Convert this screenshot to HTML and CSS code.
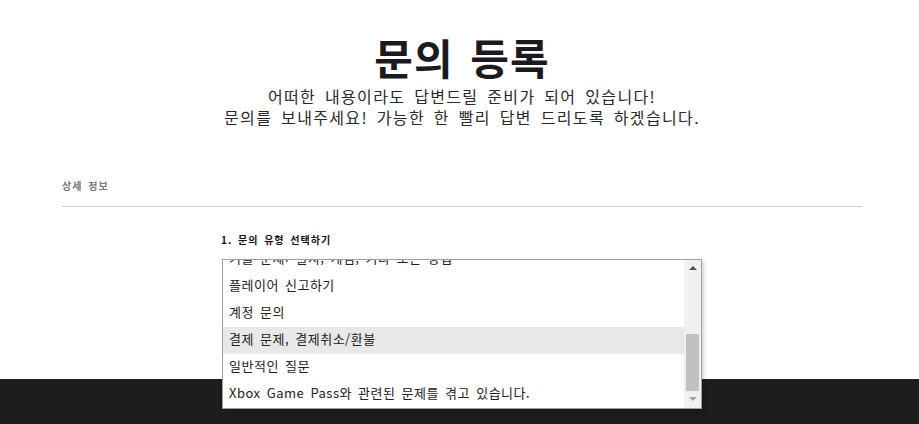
FILE: index.html
```html
<!DOCTYPE html>
<html lang="ko">
<head>
    <meta charset="UTF-8">
    <title>문의 등록</title>
    <link rel="stylesheet" href="styles.css">
</head>
<body>

<div class="page">
    <header class="intro">
        <h1>문의 등록</h1>
        <p>어떠한 내용이라도 답변드릴 준비가 되어 있습니다!<br>문의를 보내주세요! 가능한 한 빨리 답변 드리도록 하겠습니다.</p>
    </header>

    <section class="details">
        <h2 class="section-title">상세 정보</h2>

        <div class="field">
            <label class="field-label">1. 문의 유형 선택하기</label>
            <div class="select-box"></div>

            <div class="select-popup">
                <ul class="options">
                    <li>기술 문제: 설치, 게임, 기타 모든 방법</li>
                    <li>플레이어 신고하기</li>
                    <li>계정 문의</li>
                    <li class="active">결제 문제, 결제취소/환불</li>
                    <li>일반적인 질문</li>
                    <li>Xbox Game Pass와 관련된 문제를 겪고 있습니다.</li>
                </ul>
                <div class="scrollbar">
                    <span class="arrow up"></span>
                    <span class="thumb"></span>
                    <span class="arrow down"></span>
                </div>
            </div>
        </div>
    </section>
</div>

<footer class="site-footer"></footer>

</body>
</html>
```

FILE: styles.css
```css
* {
    box-sizing: border-box;
}

body {
    margin: 0;
    font-family: 'Noto Sans CJK KR', 'Noto Sans', sans-serif;
    background-color: white;
    color: #222;
}

.page {
    padding-left: 5px;
}

.intro {
    padding-top: 32px;
    text-align: center;
}

.intro h1 {
    margin: 0;
    font-size: 42px;
    line-height: 50px;
    font-weight: 700;
    letter-spacing: 1px;
    word-spacing: 4px;
    color: #1b1b1f;
}

.intro p {
    margin: 4px 0 0;
    font-size: 16px;
    line-height: 21px;
    letter-spacing: 1.35px;
    word-spacing: 3px;
    color: #2a2a2a;
}

.details {
    width: 800px;
    margin: 51px auto 0;
}

.section-title {
    margin: 0;
    padding-bottom: 13px;
    border-bottom: 1px solid #d2d2d2;
    font-size: 10px;
    line-height: 14px;
    font-weight: 700;
    letter-spacing: 1px;
    word-spacing: 2px;
    color: #777;
}

.field {
    position: relative;
    width: 482px;
    margin: 26px auto 0;
    height: 146px;
}

.field-label {
    display: block;
    font-size: 10px;
    line-height: 14px;
    font-weight: 700;
    letter-spacing: 1px;
    word-spacing: 2px;
    color: #111;
}

.select-box {
    height: 28px;
    margin-top: 6px;
}

.select-popup {
    position: absolute;
    top: 26px;
    left: 1px;
    width: 480px;
    height: 150px;
    display: flex;
    background: white;
    border: 1px solid #a0a0a0;
    box-shadow: 2px 2px 4px rgba(0,0,0,0.18);
    overflow: hidden;
    z-index: 2;
}

.options {
    flex: 1;
    list-style: none;
    margin: -14px 0 0;
    padding: 0;
}

.options li {
    height: 27px;
    line-height: 23px;
    padding: 0 0 4px 6px;
    font-size: 13px;
    letter-spacing: 0.5px;
    word-spacing: 2px;
    color: #222;
    white-space: nowrap;
}

.options li.active {
    background-color: #e8e8e8;
}

.scrollbar {
    width: 17px;
    background-color: #f0f0f0;
    display: flex;
    flex-direction: column;
    align-items: center;
}

.arrow {
    width: 0;
    height: 0;
    border-left: 4px solid transparent;
    border-right: 4px solid transparent;
}

.arrow.up {
    margin-top: 6px;
    border-bottom: 4px solid #505050;
}

.arrow.down {
    margin-top: 6px;
    border-top: 4px solid #a3a3a3;
}

.thumb {
    width: 13px;
    height: 57px;
    margin-top: 64px;
    background-color: #c1c1c1;
}

.site-footer {
    height: 60px;
    background-color: #1d1d1d;
}
```
